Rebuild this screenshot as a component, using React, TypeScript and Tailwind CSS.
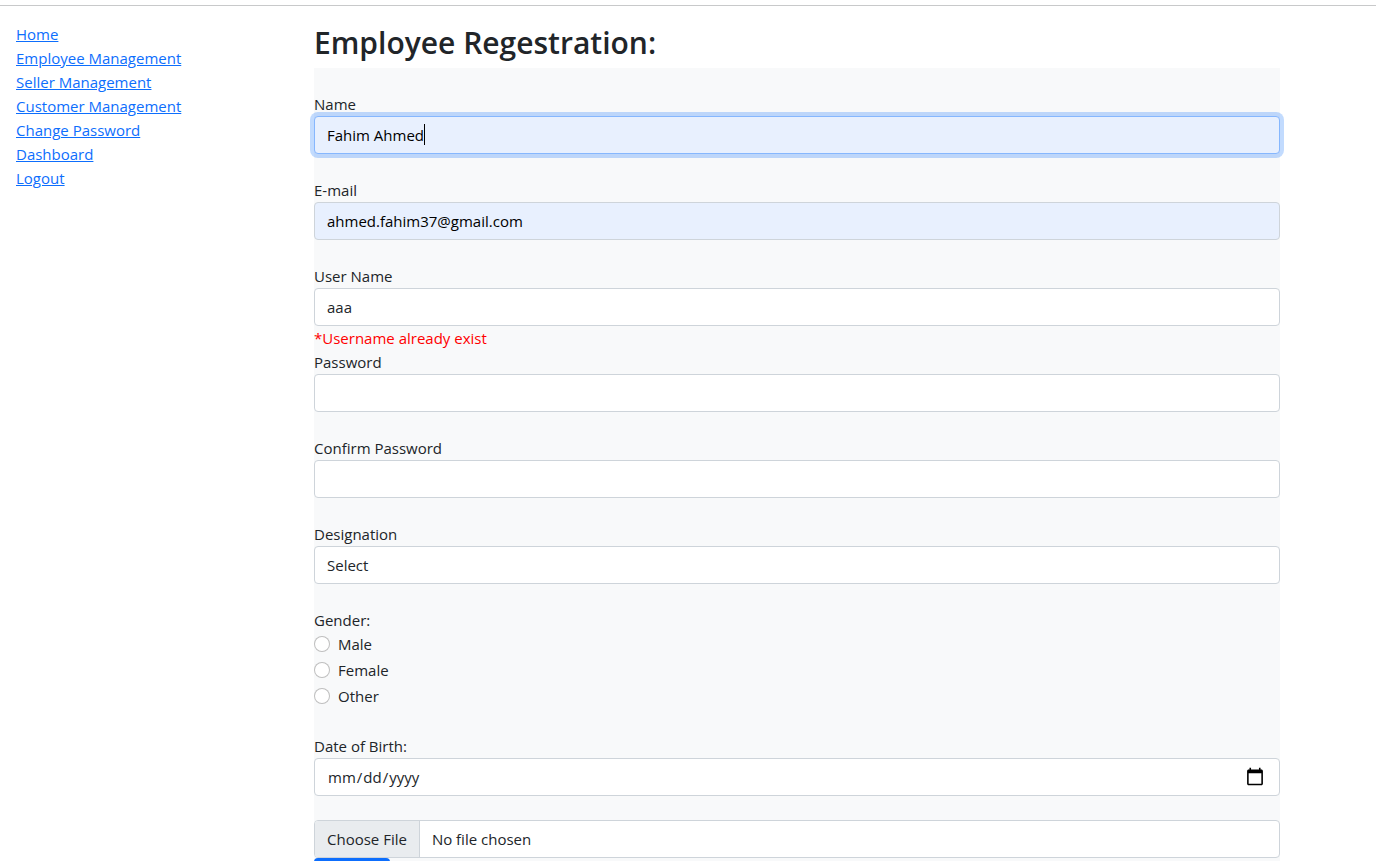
import { useEffect, useRef, type ReactNode } from "react";

const links = [
  "Home",
  "Employee Management",
  "Seller Management",
  "Customer Management",
  "Change Password",
  "Dashboard",
  "Logout",
];

const genders = ["Male", "Female", "Other"];

const control =
  "block h-[38px] w-full appearance-none rounded border border-[#ced4da] bg-white px-3 py-0 leading-6 outline-none focus:border-[#86b7fe] focus:ring-4 focus:ring-[#0d6efd]/25";

const autofilled =
  "block h-[38px] w-full appearance-none rounded border border-[#ced4da] bg-[#e8f0fe] px-3 py-0 leading-6 text-black outline-none focus:border-[#86b7fe] focus:ring-4 focus:ring-[#0d6efd]/25";

function Field({
  id,
  label,
  error,
  children,
}: {
  id: string;
  label: string;
  error?: string;
  children: ReactNode;
}) {
  return (
    <div>
      <label htmlFor={id} className="block">
        {label}
      </label>
      {children}
      <p className="h-6 text-[#ff0000]">{error}</p>
    </div>
  );
}

export default function App() {
  const nameRef = useRef<HTMLInputElement>(null);

  useEffect(() => {
    const input = nameRef.current;
    if (input) {
      input.focus();
      input.setSelectionRange(input.value.length, input.value.length);
    }
  }, []);

  return (
    <div className="bg-white pt-[5px] font-['Open_Sans','Noto_Sans',sans-serif] text-[15px] leading-6 text-[#212529]">
      <hr className="border-t border-[#c8c9ca]" />
      <div className="flex pt-4">
        <nav className="w-[314px] shrink-0 pl-4">
          <ul>
            {links.map((link) => (
              <li key={link}>
                <a href="#" className="text-[#0d6efd] underline">
                  {link}
                </a>
              </li>
            ))}
          </ul>
        </nav>
        <main className="mr-24 min-w-0 flex-1">
          <h2 className="mb-1 text-[30px] leading-[42px] font-semibold">Employee Regestration:</h2>
          <form className="bg-[#f8f9fa] pt-6">
            <Field id="name" label="Name">
              <div className="relative">
                <input
                  ref={nameRef}
                  id="name"
                  type="text"
                  defaultValue="Fahim Ahmed"
                  className={`${autofilled} peer caret-transparent`}
                />
                <span className="pointer-events-none absolute top-2 left-[110px] hidden h-[21px] w-px bg-black peer-focus:block" />
              </div>
            </Field>
            <Field id="email" label="E-mail">
              <input id="email" type="text" defaultValue="ahmed.fahim37@gmail.com" className={autofilled} />
            </Field>
            <Field id="username" label="User Name" error="*Username already exist">
              <input id="username" type="text" defaultValue="aaa" className={control} />
            </Field>
            <Field id="password" label="Password">
              <input id="password" type="password" className={control} />
            </Field>
            <Field id="confirm" label="Confirm Password">
              <input id="confirm" type="password" className={control} />
            </Field>
            <Field id="designation" label="Designation">
              <select id="designation" className={control}>
                <option>Select</option>
              </select>
            </Field>
            <fieldset className="mb-6">
              <legend>Gender:</legend>
              {genders.map((gender) => (
                <div key={gender} className="mb-0.5 flex items-center gap-2">
                  <input
                    id={gender}
                    type="radio"
                    name="gender"
                    className="size-4 appearance-none rounded-full border border-black/25 bg-white checked:border-[5px] checked:border-[#0d6efd]"
                  />
                  <label htmlFor={gender}>{gender}</label>
                </div>
              ))}
            </fieldset>
            <Field id="dob" label="Date of Birth:">
              <input
                id="dob"
                type="date"
                className={`${control} [&::-webkit-calendar-picker-indicator]:size-5`}
              />
            </Field>
            <input
              id="picture"
              type="file"
              aria-label="Picture"
              className="block h-[38px] w-full overflow-hidden rounded border border-[#ced4da] bg-white leading-6 file:mr-3 file:h-9 file:border-r file:border-[#ced4da] file:bg-[#e9ecef] file:px-3 file:text-[#212529]"
            />
            <button type="submit" className="h-[38px] w-[76px] rounded bg-[#0d6efd] text-white">
              Submit
            </button>
          </form>
        </main>
      </div>
    </div>
  );
}
